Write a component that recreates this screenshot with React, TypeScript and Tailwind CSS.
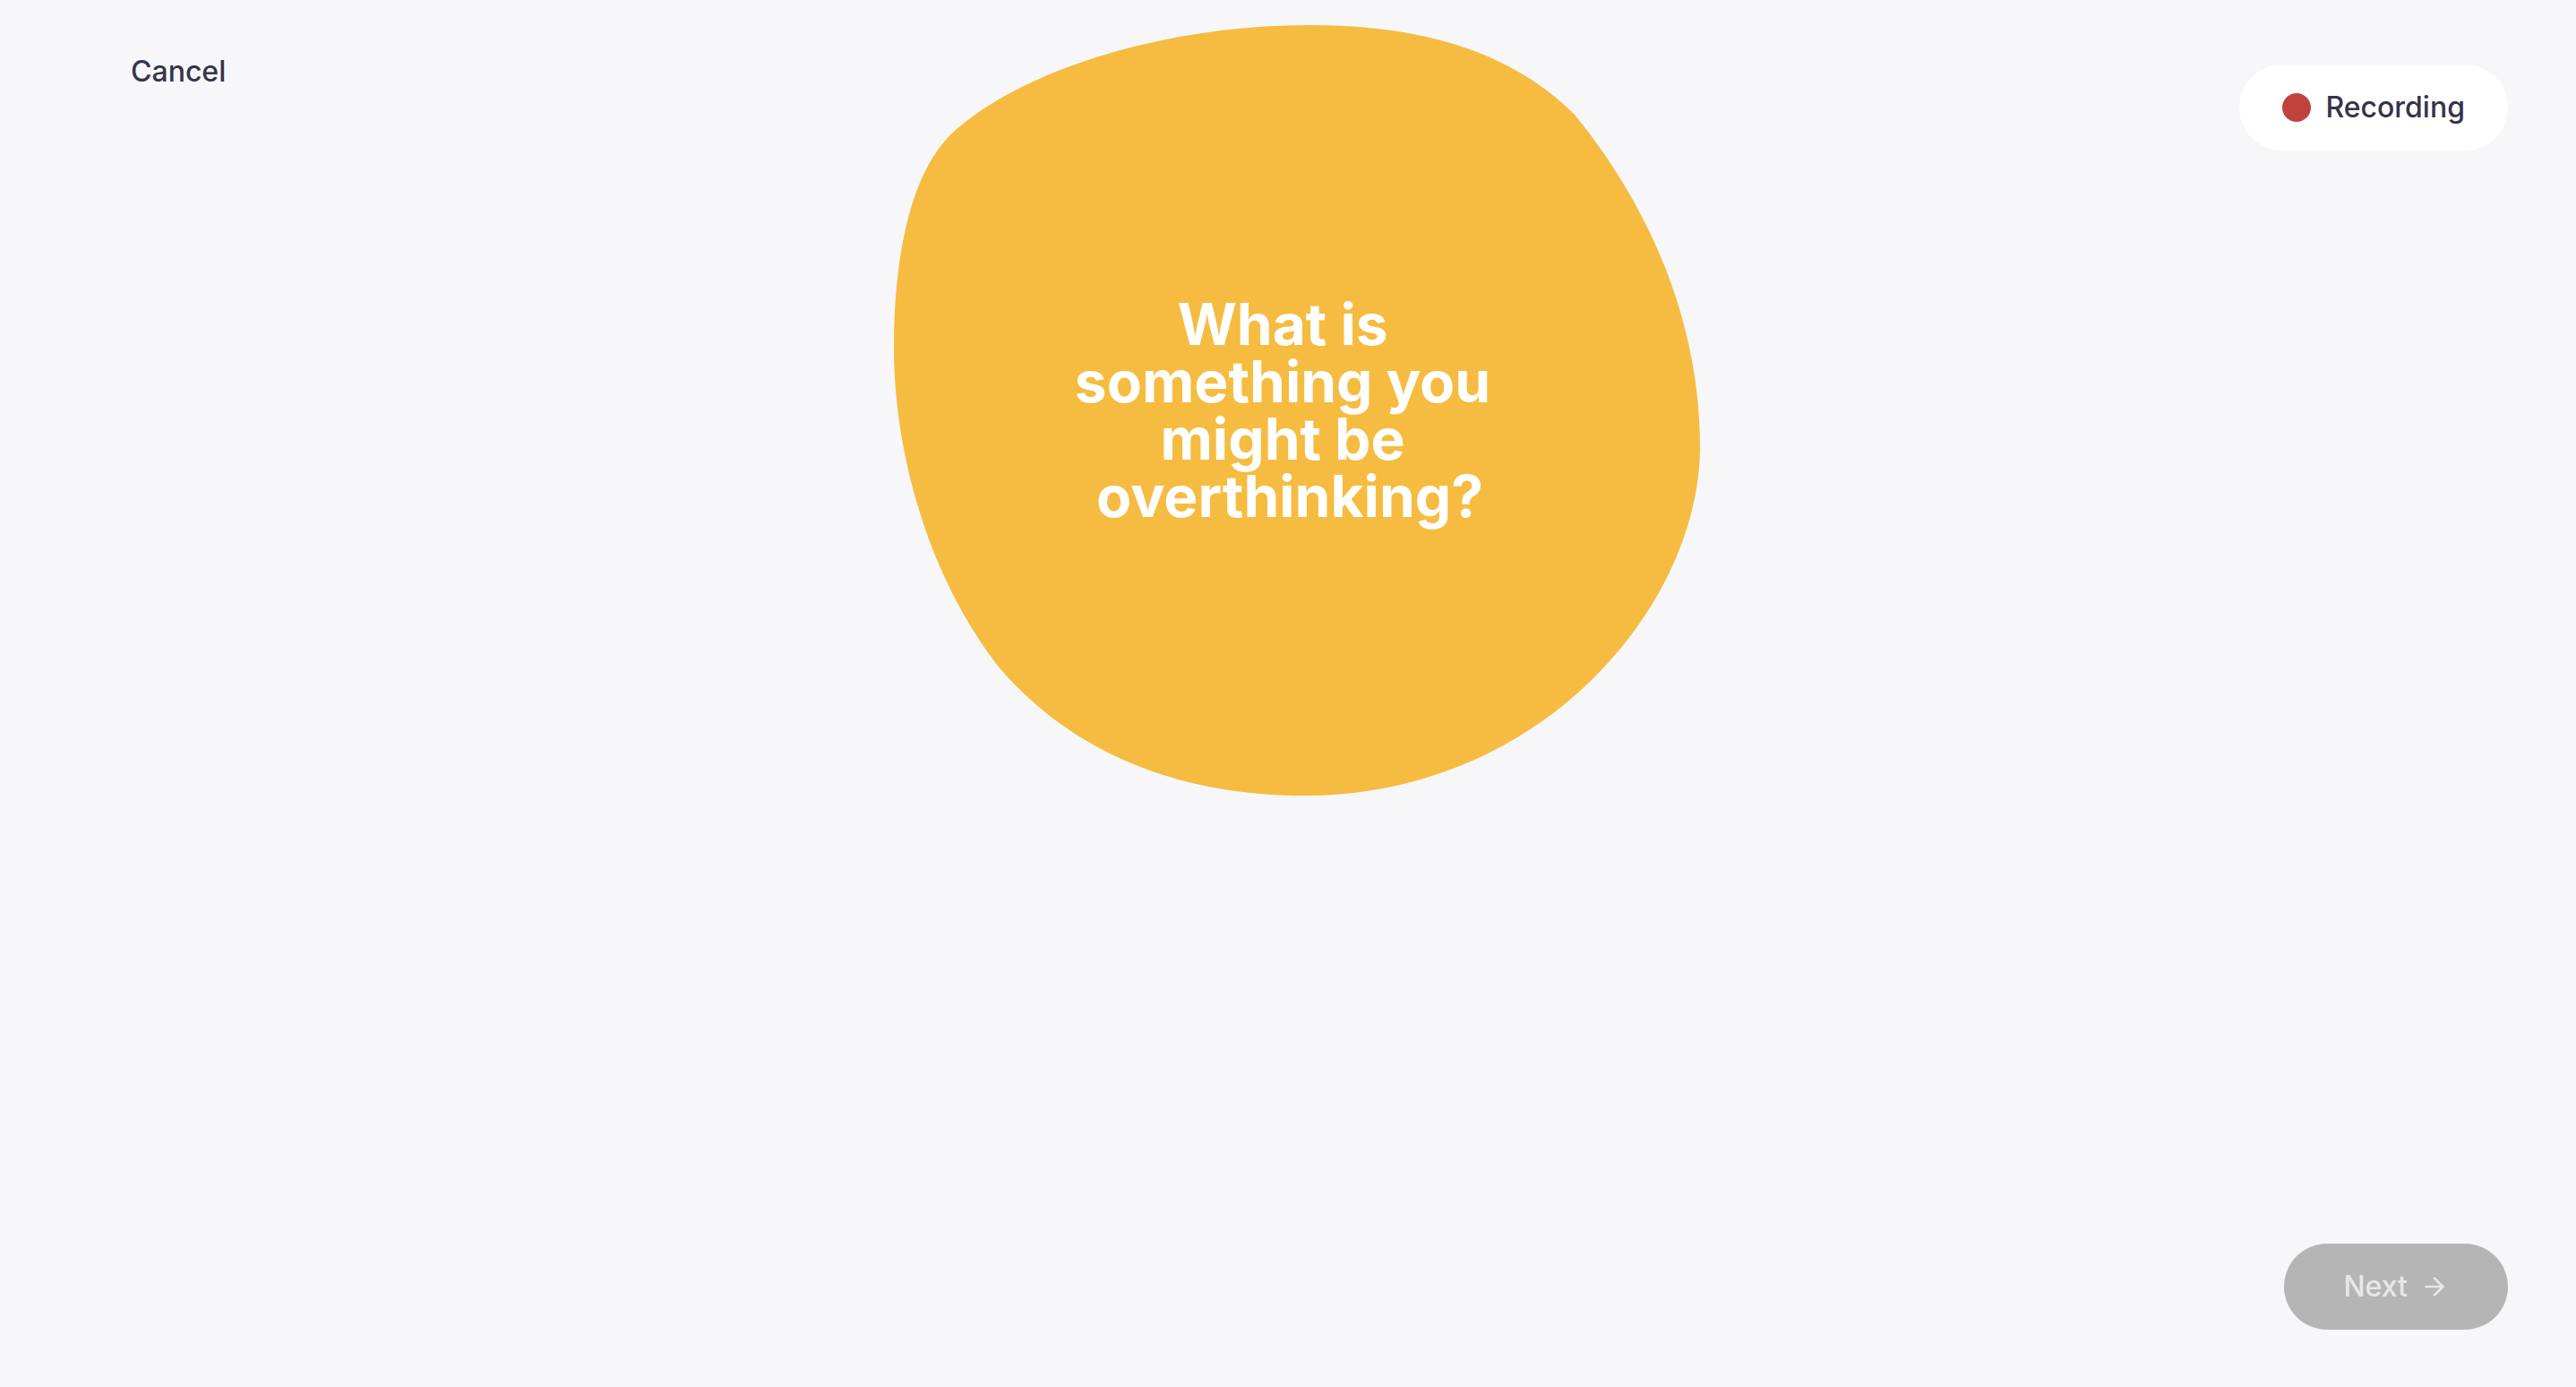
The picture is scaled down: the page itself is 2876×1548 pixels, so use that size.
import { ArrowRight } from "lucide-react";

// Blob drawn behind the question, in the box's own 900x860 space
function Blob() {
  return (
    <svg
      className="absolute inset-0 h-full w-full"
      viewBox="0 0 900 860"
      preserveAspectRatio="none"
    >
      <path
        fill="#f5bc41"
        d="M465 0 C590 0 690 30 760 100 C850 210 900 340 900 470 C900 650 720 860 459 860 C300 860 190 800 120 720 C40 620 0 480 0 360 C0 240 25 150 75 112 C150 50 300 0 465 0 Z"
      />
    </svg>
  );
}

export default function App() {
  return (
    <div className="flex h-screen w-full flex-col bg-[#f7f7f9] font-['Inter',sans-serif] text-[#35344b]">
      {/* Top: cancel / prompt / recording */}
      <div className="grid grid-cols-[1fr_auto_1fr]">
        <div className="pl-[146px] pt-[56px]">
          <button className="text-[32px] leading-[48px] font-medium">Cancel</button>
        </div>

        <div className="relative ml-[20px] mt-[28px] flex h-[860px] w-[900px] items-center justify-center pr-[32px]">
          <Blob />
          <h1 className="relative w-[500px] text-center text-[64px] leading-[64px] font-bold text-white">
            What is something you might be <span className="pl-4">overthinking?</span>
          </h1>
        </div>

        <div className="flex items-start justify-end pr-[76px] pt-[72px]">
          <div className="flex items-center gap-4 rounded-full bg-white px-12 py-6">
            <span className="h-8 w-8 rounded-full bg-[#bf433c]" />
            <span className="text-[32px] leading-[48px] font-medium">Recording</span>
          </div>
        </div>
      </div>

      <div className="flex-1" />

      {/* Bottom: next */}
      <div className="flex justify-end pb-[64px] pr-[76px]">
        <button
          disabled
          className="flex items-center gap-[14px] rounded-full bg-[#b5b5b5] px-[66px] py-6 text-[32px] leading-[48px] font-medium text-[#e8e8e8]"
        >
          Next
          <ArrowRight size={32} strokeWidth={2} />
        </button>
      </div>
    </div>
  );
}
